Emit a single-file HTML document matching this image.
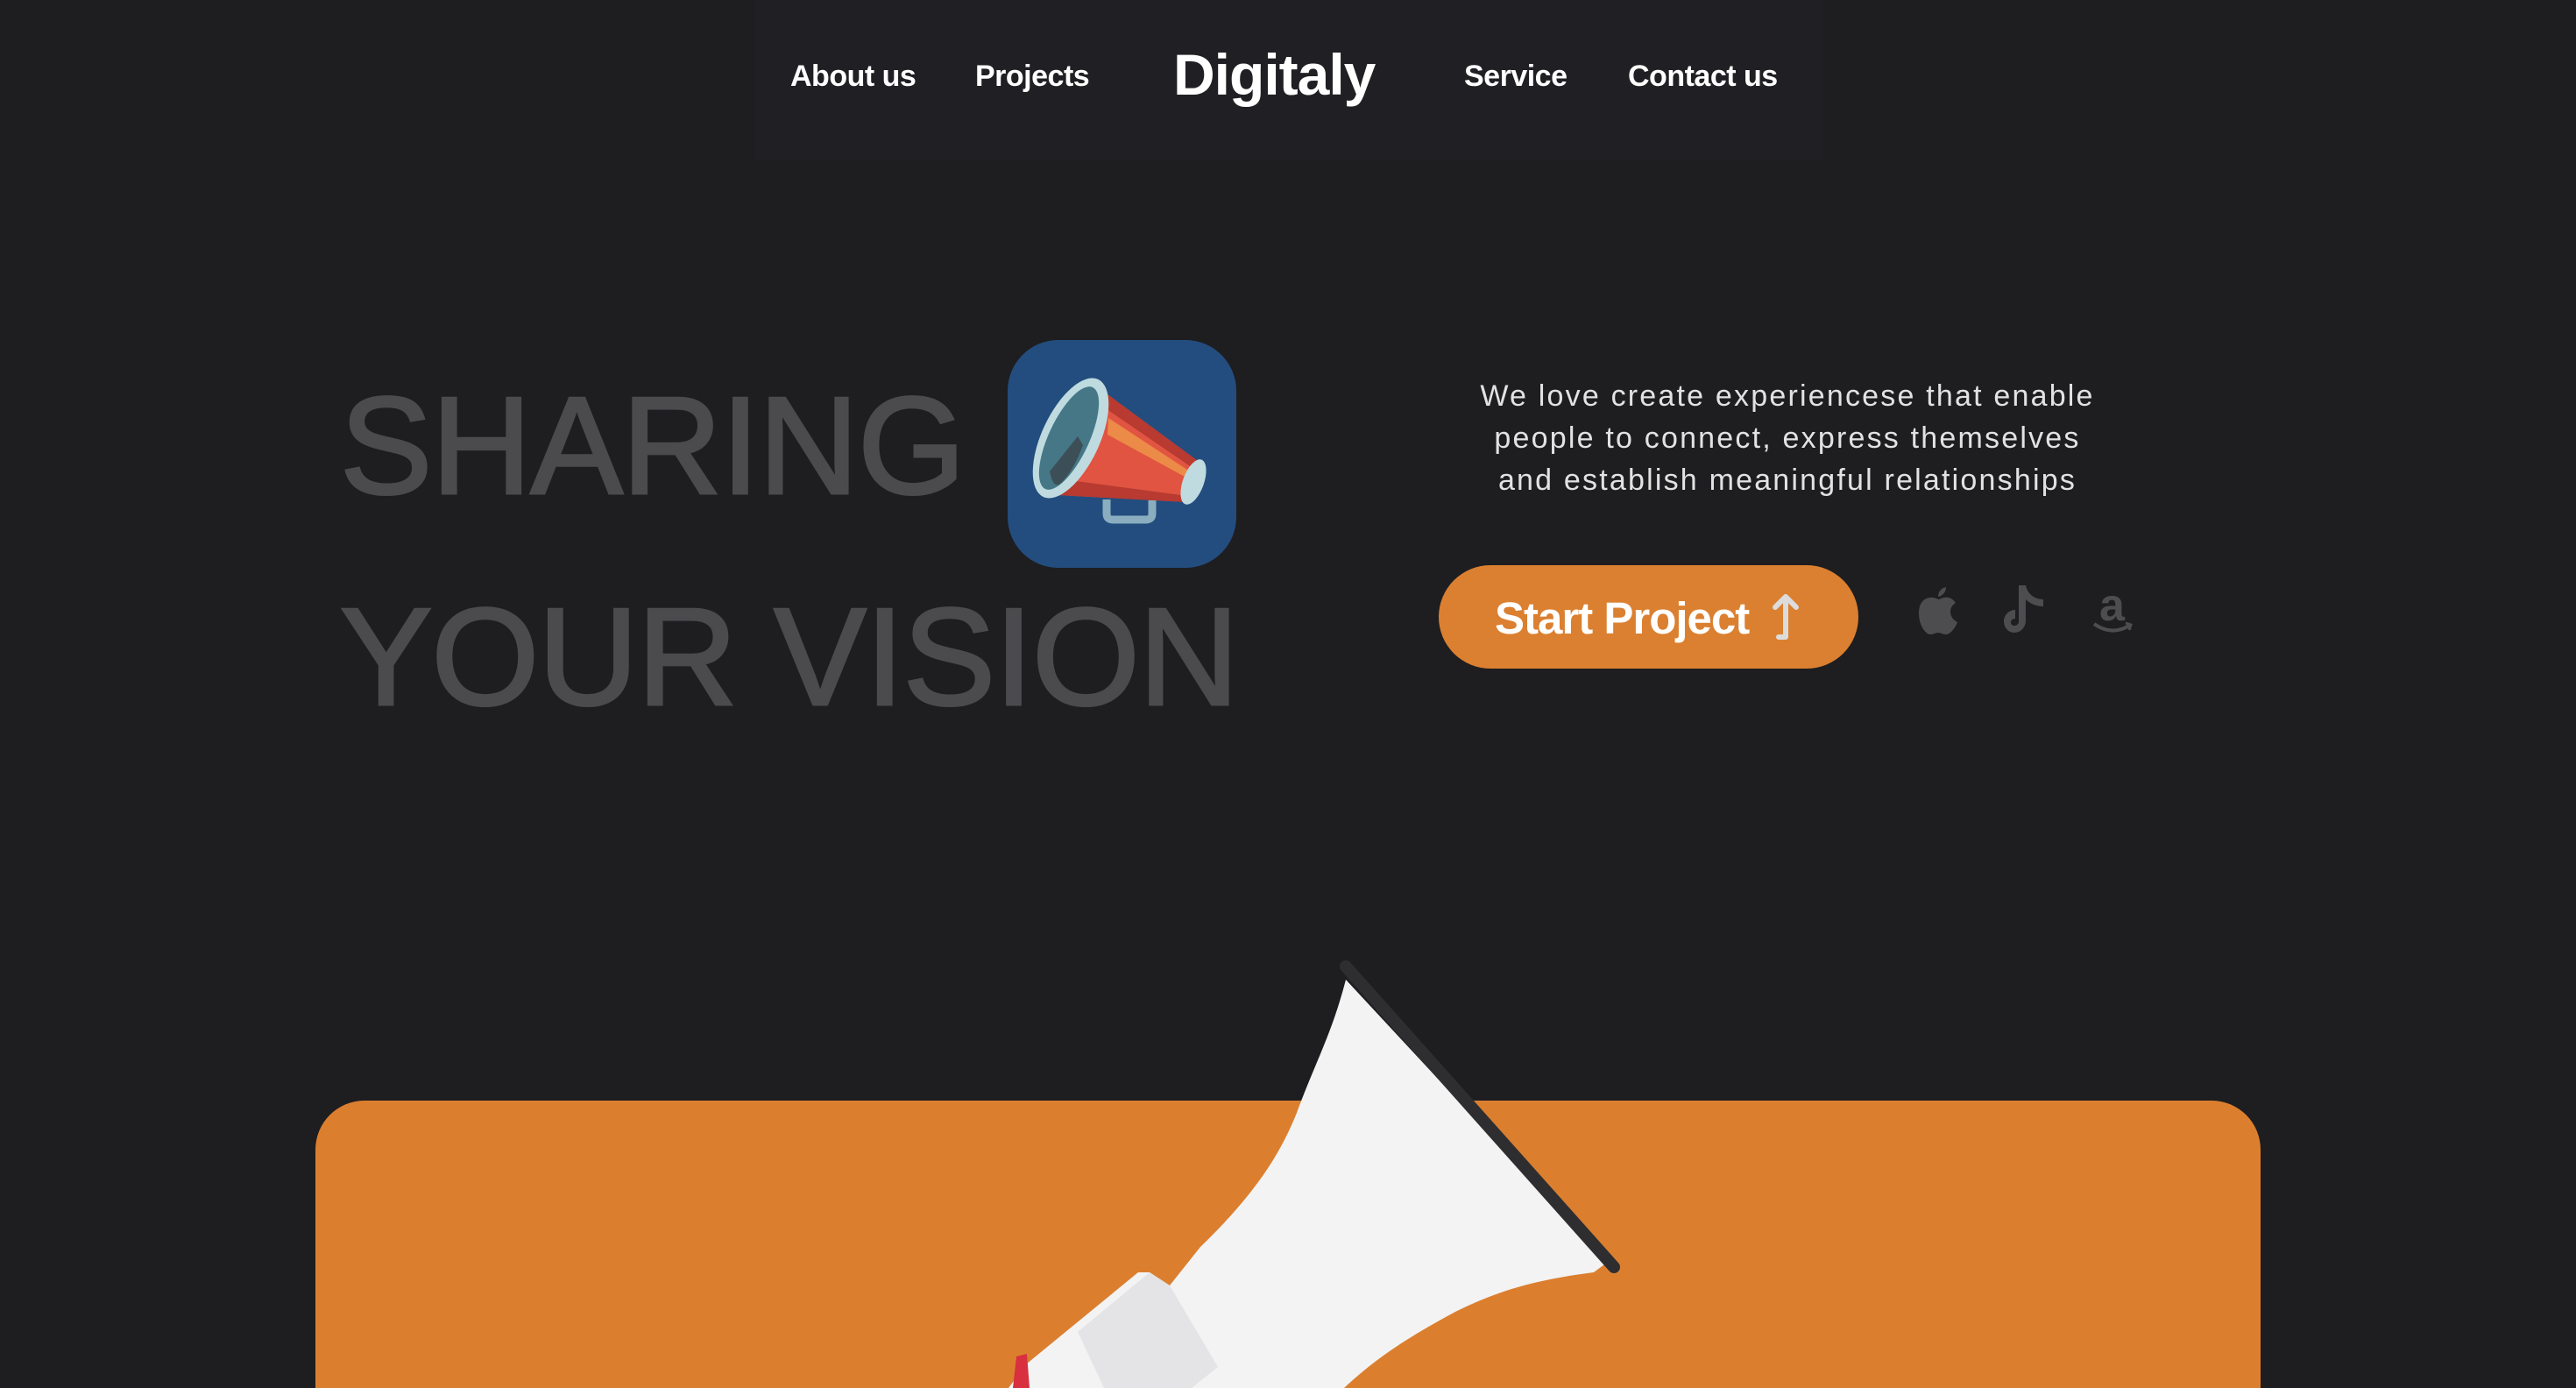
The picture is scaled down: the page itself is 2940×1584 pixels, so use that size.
<!DOCTYPE html>
<html><head><meta charset="utf-8"><style>
html,body{margin:0;padding:0;overflow:hidden;width:2940px;height:1584px}
body{background:#1e1d20;position:relative;font-family:"Liberation Sans",sans-serif}
.nav{position:absolute;left:862px;top:0;width:1218px;height:183px;background:#201f23}
.n{position:absolute;color:#fff;font-weight:bold;font-size:34px;line-height:1;top:70px;letter-spacing:-0.5px}
.big{position:absolute;left:388px;color:#4b4a4c;font-size:158px;letter-spacing:-1px;line-height:1;white-space:nowrap;-webkit-text-stroke:3px #4b4a4c}
.p{position:absolute;left:1590px;width:900px;top:428px;text-align:center;color:#e2e2e2;font-size:34px;line-height:48px;letter-spacing:2.2px}
.btn{position:absolute;left:1642px;top:645px;width:479px;height:118px;border-radius:59px;background:#db8030;color:#fff;font-weight:bold;font-size:51px;letter-spacing:-1px}
.card{position:absolute;left:360px;top:1256px;width:2220px;height:328px;border-radius:56px 56px 0 0;background:#db7f2f}
</style></head><body>
<div class="nav"></div>
<div class="n" style="left:902px">About us</div>
<div class="n" style="left:1113px">Projects</div>
<div class="n" style="left:1339px;top:52px;font-size:66px;letter-spacing:-1px">Digitaly</div>
<div class="n" style="left:1671px">Service</div>
<div class="n" style="left:1858px">Contact us</div>

<div class="big" style="top:430px">SHARING</div>
<div class="big" style="top:671px">YOUR VISION</div>

<svg style="position:absolute;left:1150px;top:388px" width="261" height="260" viewBox="0 0 261 260">
<rect width="261" height="260" rx="58" fill="#234d7e"/>
<path d="M113 182 L113 198 Q113 205 120 205 L158 205 Q165 205 165 198 L165 183" fill="none" stroke="#8aaebf" stroke-width="9"/>
<polygon points="95,48 217,138 205,185 57,177" fill="#e05441"/>
<polygon points="95,48 217,138 214,148 100,70" fill="#b83a30"/>
<polygon points="70,160 205,178 203,185 57,177" fill="#b83a30"/>
<polygon points="115,89 208,150 204,157 114,108" fill="#ec8a48"/>
<ellipse cx="212" cy="162" rx="12" ry="27" transform="rotate(20 212 162)" fill="#bfdbe0"/>
<ellipse cx="72" cy="112" rx="33" ry="74" transform="rotate(25 72 112)" fill="#bfdbe0"/>
<ellipse cx="70" cy="112" rx="23" ry="64" transform="rotate(25 70 112)" fill="#457787"/>
<path d="M48 150 Q52 170 60 164 Q75 150 86 120 L80 110 Z" fill="#3a3f42" opacity=".7"/>
</svg>

<div class="p">We love create experiencese that enable<br>people to connect, express themselves<br>and establish meaningful relationships</div>

<div class="btn"><span style="position:absolute;left:64px;top:31px">Start Project</span>
<svg style="position:absolute;left:378px;top:32px" width="36" height="56" viewBox="0 0 36 56"><path d="M18 4 L18 50 L10 50 M6 16 L18 4 L30 16" fill="none" stroke="#dcdcdc" stroke-width="6" stroke-linecap="round" stroke-linejoin="round"/></svg></div>

<svg style="position:absolute;left:2186px;top:668px" width="52" height="60" viewBox="0 0 52 60"><path d="M26 16 C20 12 4 12 4 32 C4 46 12 56 17 56 C21 56 23 54 26 54 C29 54 31 56 35 56 C40 56 46 48 48 42 C42 39 40 34 40 30 C40 25 43 22 46 20 C42 14 36 13 33 14 C30 14 28 16 26 16 Z M26 13 C26 7 30 3 35 2 C35 8 31 12 26 13 Z" fill="#4d4d4f"/></svg>
<svg style="position:absolute;left:2282px;top:664px" width="56" height="66" viewBox="0 0 56 66"><path d="M30 4 L30 44 C30 52 24 58 17 58 C10 58 5 52 5 45 C5 38 11 32 18 32 L18 42 C15 42 13 44 13 46 C13 49 15 50 17 50 C20 50 22 48 22 45 L22 4 Z M30 4 C32 14 40 20 50 20 L50 28 C42 28 35 25 30 20 Z" fill="#4d4d4f"/></svg>
<svg style="position:absolute;left:2384px;top:666px" width="56" height="64" viewBox="0 0 56 64"><text x="12" y="42" font-family="Liberation Sans" font-weight="bold" font-size="52" fill="#4d4d4f">a</text><path d="M6 46 Q26 60 46 48" fill="none" stroke="#4d4d4f" stroke-width="4"/><path d="M42 45 L48 47 L46 53" fill="none" stroke="#4d4d4f" stroke-width="3"/></svg>

<div class="card"></div>

<svg style="position:absolute;left:0;top:0" width="2940" height="1584" viewBox="0 0 2940 1584">
<path d="M1536 1118 C1520 1180 1500 1215 1480 1270 C1460 1320 1430 1365 1370 1423 L1335 1467 L1312 1452 L1299 1452 L1171 1557 L1151 1584 L1534 1584 C1560 1560 1590 1535 1661 1497 C1700 1478 1740 1462 1819 1452 L1835 1440 Z" fill="#f3f3f4"/>
<path d="M1312 1452 L1335 1467 L1390 1560 L1360 1584 L1260 1584 L1230 1520 Z" fill="#e4e4e6"/>
<path d="M1536 1103 L1842 1446" stroke="#2e2e30" stroke-width="14" stroke-linecap="round"/>
<path d="M1160 1548 L1172 1545 L1175 1584 L1156 1584 Z" fill="#d8303f"/>
</svg>
</body></html>
